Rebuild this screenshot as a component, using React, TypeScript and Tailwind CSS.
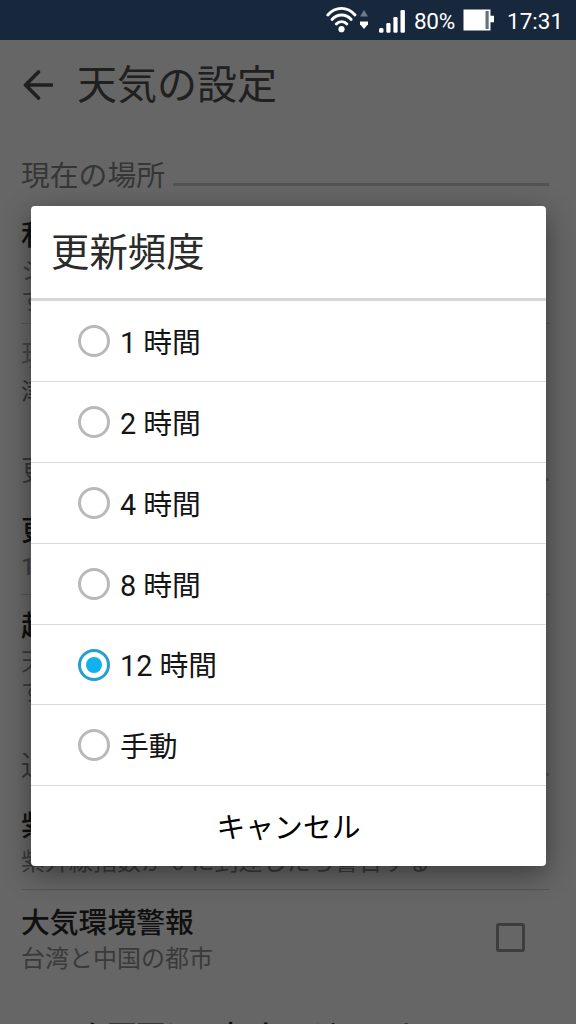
import { useState } from "react";
import clsx from "clsx";

const OPTIONS = ["1 時間", "2 時間", "4 時間", "8 時間", "12 時間", "手動"];

function StatusBar() {
  return (
    <div className="flex h-10 items-center bg-[#17273c] text-white">
      <svg className="ml-[326px] h-7 w-[43px] shrink-0" viewBox="0 0 43 28" fill="none">
        <g stroke="#fff" strokeWidth="2.9" strokeLinecap="round">
          <path d="M1.8 9C9.5 .2 21.5 .2 29 9" />
          <path d="M6 13.5C11.5 7.4 19.8 7.4 25.2 13.5" />
          <path d="M10.3 18C13.2 14.8 18 14.8 20.9 18" />
        </g>
        <circle cx="15.5" cy="23.2" r="3.1" fill="#fff" />
        <path d="M34 10.5l4-6.5 4 6.5z" fill="#6f7c8c" />
        <path d="M34 15.5h8v2.7L38 23l-4-4.8z" fill="#fff" />
      </svg>
      <svg className="mt-0.5 ml-2.5 h-6 w-[27px] shrink-0" viewBox="0 0 27 24" fill="#fff">
        <rect x="0" y="19" width="4.5" height="4.7" rx="1.5" />
        <rect x="7.3" y="14" width="4.2" height="9.7" rx="1.2" />
        <rect x="14.4" y="8" width="4.2" height="15.7" rx="1.2" />
        <rect x="21.5" y="1" width="4.4" height="22.7" rx="1.2" />
      </svg>
      <span className="mt-[3px] ml-2 w-[42px] text-[22.5px] tracking-[-0.3px]">80%</span>
      <svg className="ml-[7px] h-6 w-8 shrink-0" viewBox="0 0 32 24">
        <path d="M.5 1.5h27v6.3H31v6.4h-3.5v8.3H.5z" fill="#fff" />
        <path d="M22.5 3h3.2v18h-3.2z" fill="#66717f" />
      </svg>
      <span className="mt-[3px] ml-3 text-[22.5px]">17:31</span>
    </div>
  );
}

function SectionHeader({ title }: { title: string }) {
  return (
    <div className="flex h-[58px] items-center gap-2 text-[#363636]">
      <h2 className="pt-0.5 text-[28.8px] leading-[30px]">{title}</h2>
      <div className="mt-[18px] h-[3px] flex-1 bg-[#525353]" />
    </div>
  );
}

interface SettingProps {
  title: string;
  lines: string[];
  className: string;
  disabled?: boolean;
  last?: boolean;
  checkbox?: boolean;
}

function Setting({ title, lines, className, disabled, last, checkbox }: SettingProps) {
  return (
    <div className={clsx("flex justify-between", className, !last && "border-b border-[#565656]")}>
      <div className="whitespace-nowrap">
        <h3
          className={clsx(
            "mb-0.5 text-[28.8px] leading-[38px]",
            disabled ? "text-[#484848]" : "font-medium text-[#101010]"
          )}
        >
          {title}
        </h3>
        {lines.map((line) => (
          <p key={line} className={clsx("text-2xl leading-[30px]", disabled ? "text-[#303030]" : "text-[#3a3a3a]")}>
            {line}
          </p>
        ))}
      </div>
      {checkbox && <span className="mt-[19px] mr-6 h-[29px] w-[29px] rounded-[3px] border-[3px] border-[#3d3d3d]" />}
    </div>
  );
}

function SettingsPage() {
  return (
    <div className="h-[984px] overflow-hidden bg-[#666] pr-[27px] pl-[21px]">
      <header className="flex h-[106px] items-start pt-[22px] text-[#202020]">
        <svg
          className="mt-[7px] h-8 w-8"
          viewBox="0 0 32 32"
          fill="none"
          stroke="currentColor"
          strokeWidth="3.6"
          strokeLinecap="round"
          strokeLinejoin="round"
        >
          <path d="M17.5 3L4.5 16l13 13M4.5 16h26" />
        </svg>
        <h1 className="mt-0.5 ml-6 text-[40px] leading-[44px]">天気の設定</h1>
      </header>
      <SectionHeader title="現在の場所" />
      <Setting className="h-[120px] pt-3" title="利用する位置情報" lines={["システムの現在地を使用", "する"]} />
      <Setting className="h-[117px] pt-[13px]" title="現在地" lines={["津市"]} disabled last />
      <SectionHeader title="更新" />
      <Setting className="h-[96px] pt-[13px]" title="更新頻度" lines={["12 時間"]} />
      <Setting className="h-[141px] pt-3" title="起動時に更新" lines={["天気を開いたときに更新", "する"]} last />
      <SectionHeader title="通知" />
      <Setting className="h-[96px] pt-[13px]" title="紫外線警報" lines={["紫外線指数が 6 に到達したら警告する"]} />
      <Setting className="h-[117px] pt-3.5" title="大気環境警報" lines={["台湾と中国の都市"]} checkbox last />
      <Setting className="h-20 pt-2.5" title="ロック画面に天気ウィジェット" lines={[]} last />
    </div>
  );
}

export default function App() {
  const [selected, setSelected] = useState("12 時間");

  return (
    <div
      className="relative h-[1024px] w-[576px] overflow-hidden font-[Roboto,'Noto_Sans_CJK_JP',sans-serif]"
      lang="ja"
    >
      <StatusBar />
      <SettingsPage />

      {/* Update frequency dialog */}
      <div
        role="dialog"
        className="absolute top-[206px] left-[31px] h-[660px] w-[515px] overflow-hidden rounded-[4px] bg-white shadow-[0_8px_28px_rgba(0,0,0,0.42)]"
      >
        <h2 className="h-[95px] border-b-[3px] border-[#d6d6d6] pt-[25px] pl-5 text-[38.4px] leading-[44px] text-[#2b2b2b]">
          更新頻度
        </h2>
        {OPTIONS.map((option) => (
          <button
            key={option}
            onClick={() => setSelected(option)}
            className="flex h-[80.9px] w-full items-center border-b border-[#dadada] pl-[47px] text-[28.8px] text-[#151515]"
          >
            <span
              className={clsx(
                "flex h-8 w-8 items-center justify-center rounded-full border-[3px]",
                selected === option ? "border-[#239fd0]" : "border-[#b9b9b9]"
              )}
            >
              {selected === option && <span className="h-4 w-4 rounded-full bg-[#12b0ee]" />}
            </span>
            <span className="mt-[5px] ml-2.5">{option}</span>
          </button>
        ))}
        <button className="h-[79px] w-full pt-1.5 text-[28.8px] text-black">キャンセル</button>
      </div>
    </div>
  );
}
